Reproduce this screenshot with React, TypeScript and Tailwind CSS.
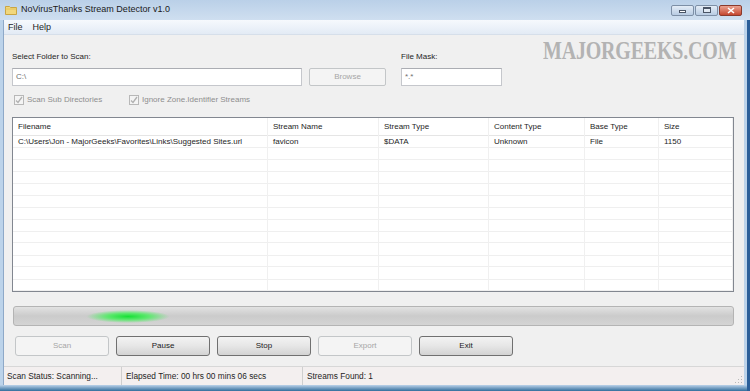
import React from "react";

type Col = { title: string; width: string };

const columns: Col[] = [
  { title: "Filename", width: "w-[255px]" },
  { title: "Stream Name", width: "w-[111px]" },
  { title: "Stream Type", width: "w-[110px]" },
  { title: "Content Type", width: "w-[96px]" },
  { title: "Base Type", width: "w-[74px]" },
  { title: "Size", width: "w-[74px]" },
];

const rows: string[][] = [
  [
    "C:\\Users\\Jon - MajorGeeks\\Favorites\\Links\\Suggested Sites.url",
    "favicon",
    "$DATA",
    "Unknown",
    "File",
    "1150",
  ],
  ...Array.from({ length: 12 }, () => ["", "", "", "", "", ""]),
];

function WinButton({ kind }: { kind: "min" | "max" | "close" }) {
  if (kind === "close") {
    return (
      <div className="w-[23px] h-[11px] rounded-[2px] border border-[#8a3a2c] bg-gradient-to-b from-[#eaa190] to-[#c4462f] flex items-center justify-center">
        <svg width="8" height="7" viewBox="0 0 8 7">
          <path d="M1 1 L7 6 M7 1 L1 6" stroke="#fff" strokeWidth="1.6" />
        </svg>
      </div>
    );
  }
  return (
    <div className="w-[23px] h-[11px] rounded-[2px] border border-[#7d8fa6] bg-gradient-to-b from-[#e4edf7] to-[#b8cbe2] flex items-center justify-center">
      {kind === "min" ? (
        <div className="w-[7px] h-[3px] mt-[3px] bg-white border border-[#4a5566]" />
      ) : (
        <div className="w-[8px] h-[6px] border border-[#4a5566] border-t-2 bg-white/40" />
      )}
    </div>
  );
}

function Checkbox({ label }: { label: string }) {
  return (
    <div className="flex items-center gap-[3px] text-[#8e8e8e]">
      <div className="w-[10px] h-[10px] border border-[#b8b8b8] bg-[#f4f4f4] flex items-center justify-center">
        <svg width="8" height="8" viewBox="0 0 8 8">
          <path d="M1 4.5 L3 6.5 L7 1" stroke="#b0b0b0" strokeWidth="1.3" fill="none" />
        </svg>
      </div>
      <span>{label}</span>
    </div>
  );
}

function Btn({ label, disabled }: { label: string; disabled?: boolean }) {
  return disabled ? (
    <div className="w-[94px] h-[20px] rounded-[3px] border border-[#c3c6c8] bg-[#f4f4f4] text-[#a6a6a6] flex items-center justify-center">
      {label}
    </div>
  ) : (
    <div className="w-[94px] h-[20px] rounded-[3px] border border-[#707070] bg-gradient-to-b from-[#f3f3f3] via-[#e6e6e6] to-[#d3d3d3] text-[#1a1a1a] flex items-center justify-center">
      {label}
    </div>
  );
}

export default function App() {
  return (
    <div className="relative w-[750px] h-[391px] overflow-hidden bg-[#bcd3ea] flex flex-col font-['Liberation_Sans',Arial,sans-serif] text-[8px] text-[#1e1e1e]">
      {/* title bar */}
      <div className="h-[20px] flex items-center bg-gradient-to-b from-[#bad0e8] to-[#cfdff0]">
        <svg className="ml-[5px]" width="12" height="10" viewBox="0 0 12 10">
          <path d="M0.5 1.5 H4.5 L5.5 2.5 H11.5 V9.5 H0.5 Z" fill="#f1d77c" stroke="#c9a544" />
          <path d="M0.5 4 H11.5" stroke="#e3c35c" />
        </svg>
        <span className="ml-[4px] text-[9px] text-[#1a1a1a]">NoVirusThanks Stream Detector v1.0</span>
        <div className="ml-auto mr-[8px] flex gap-[1px]">
          <WinButton kind="min" />
          <WinButton kind="max" />
          <WinButton kind="close" />
        </div>
      </div>

      {/* client area */}
      <div className="flex-1 ml-[3px] mr-[6px] flex flex-col bg-[#f0f0f0] border-l border-[#8ea9c8]">
        {/* menu */}
        <div className="h-[15px] flex items-center gap-[10px] pl-[4px] pt-[2px] bg-gradient-to-b from-[#f6f9fd] to-[#e3ebf5] border-b border-[#d6dfea] text-[9px]">
          <span>File</span>
          <span>Help</span>
        </div>

        <div className="flex flex-col pl-[8px] pr-[9px]">
          {/* folder row */}
          <div className="flex mt-[16px]">
            <div className="flex flex-col w-[290px]">
              <span className="h-[12px] leading-[12px]">Select Folder to Scan:</span>
              <div className="mt-[5px] h-[18px] bg-white border border-[#c5c7cc] border-t-[#abadb3] flex items-center pl-[3px] text-[#6f6f6f]">
                C:\
              </div>
            </div>
            <div className="ml-[7px] mt-[17px]">
              <div className="w-[77px] h-[18px] rounded-[2px] border border-[#c3c6c8] bg-[#f4f4f4] text-[#a6a6a6] flex items-center justify-center">
                Browse
              </div>
            </div>
            <div className="flex flex-col ml-[15px] w-[101px]">
              <span className="h-[12px] leading-[12px]">File Mask:</span>
              <div className="mt-[5px] h-[18px] bg-white border border-[#c5c7cc] border-t-[#abadb3] flex items-center pl-[3px] text-[#6f6f6f]">
                *.*
              </div>
            </div>
          </div>

          {/* checkboxes */}
          <div className="flex mt-[8px] h-[12px] items-center pl-[2px]">
            <div className="w-[115px]">
              <Checkbox label="Scan Sub Directories" />
            </div>
            <Checkbox label="Ignore Zone.Identifier Streams" />
          </div>

          {/* table */}
          <div className="mt-[11px] h-[175px] w-[722px] border border-[#828790] bg-white flex overflow-hidden">
            {columns.map((c, ci) => (
              <div key={c.title} className={`${c.width} flex flex-col border-r border-[#f0f0f0] shrink-0`}>
                <div className="h-[19px] flex items-center pl-[5px] border-b border-[#e5e5e5]">{c.title}</div>
                {rows.map((r, ri) => (
                  <div
                    key={ri}
                    className={
                      ri % 2 === 0
                        ? "h-[12px] flex items-center pl-[5px] border-b border-[#efefef] whitespace-nowrap"
                        : "h-[13px] flex items-center pl-[5px] border-b border-[#efefef] whitespace-nowrap"
                    }
                  >
                    {r[ci]}
                  </div>
                ))}
              </div>
            ))}
          </div>

          {/* progress */}
          <div className="relative mt-[14px] ml-[1px] h-[20px] w-[721px] rounded-[3px] border border-[#b4b4b4] bg-gradient-to-b from-[#e2e2e2] via-[#cbcbcb] to-[#d4d4d4] overflow-hidden">
            <div className="absolute left-[72px] top-[3px] w-[84px] h-[13px] bg-[radial-gradient(ellipse_at_center,#16e035_0%,#5ee86f_35%,rgba(200,230,200,0)_70%)]" />
          </div>

          {/* buttons */}
          <div className="flex gap-[7px] mt-[10px] ml-[3px]">
            <Btn label="Scan" disabled />
            <Btn label="Pause" />
            <Btn label="Stop" />
            <Btn label="Export" disabled />
            <Btn label="Exit" />
          </div>
        </div>

        {/* status bar */}
        <div className="mt-auto h-[19px] flex items-center border-t border-[#d7d7d7] bg-[#f3efef] text-[8.3px]">
          <div className="w-[118px] pl-[3px] border-r border-[#cfcfcf] h-full flex items-center">Scan Status: Scanning...</div>
          <div className="w-[181px] pl-[4px] border-r border-[#cfcfcf] h-full flex items-center">Elapsed Time: 00 hrs 00 mins 06 secs</div>
          <div className="pl-[4px]">Streams Found: 1</div>
          <svg className="ml-auto mr-[1px] self-end mb-[1px]" width="8" height="8" viewBox="0 0 8 8">
            <g fill="#b9b9b9">
              <rect x="6" y="0" width="1" height="1" />
              <rect x="3" y="3" width="1" height="1" />
              <rect x="6" y="3" width="1" height="1" />
              <rect x="0" y="6" width="1" height="1" />
              <rect x="3" y="6" width="1" height="1" />
              <rect x="6" y="6" width="1" height="1" />
            </g>
          </svg>
        </div>
      </div>

      {/* bottom frame */}
      <div className="h-[6px] bg-gradient-to-b from-[#bcd3ea] to-[#2f6e9c]" />
      <div className="absolute right-0 top-[20px] bottom-0 w-[3px] bg-[#2c5f99]" />

      {/* watermark */}
      <div className="absolute left-[543px] top-[37px] w-[198px] text-[20px] leading-[20px] font-bold text-[#b3b3b3] font-['Liberation_Serif',serif] scale-y-[1.3] origin-top tracking-[-0.2px] whitespace-nowrap">
        MAJORGEEKS.COM
      </div>
    </div>
  );
}
